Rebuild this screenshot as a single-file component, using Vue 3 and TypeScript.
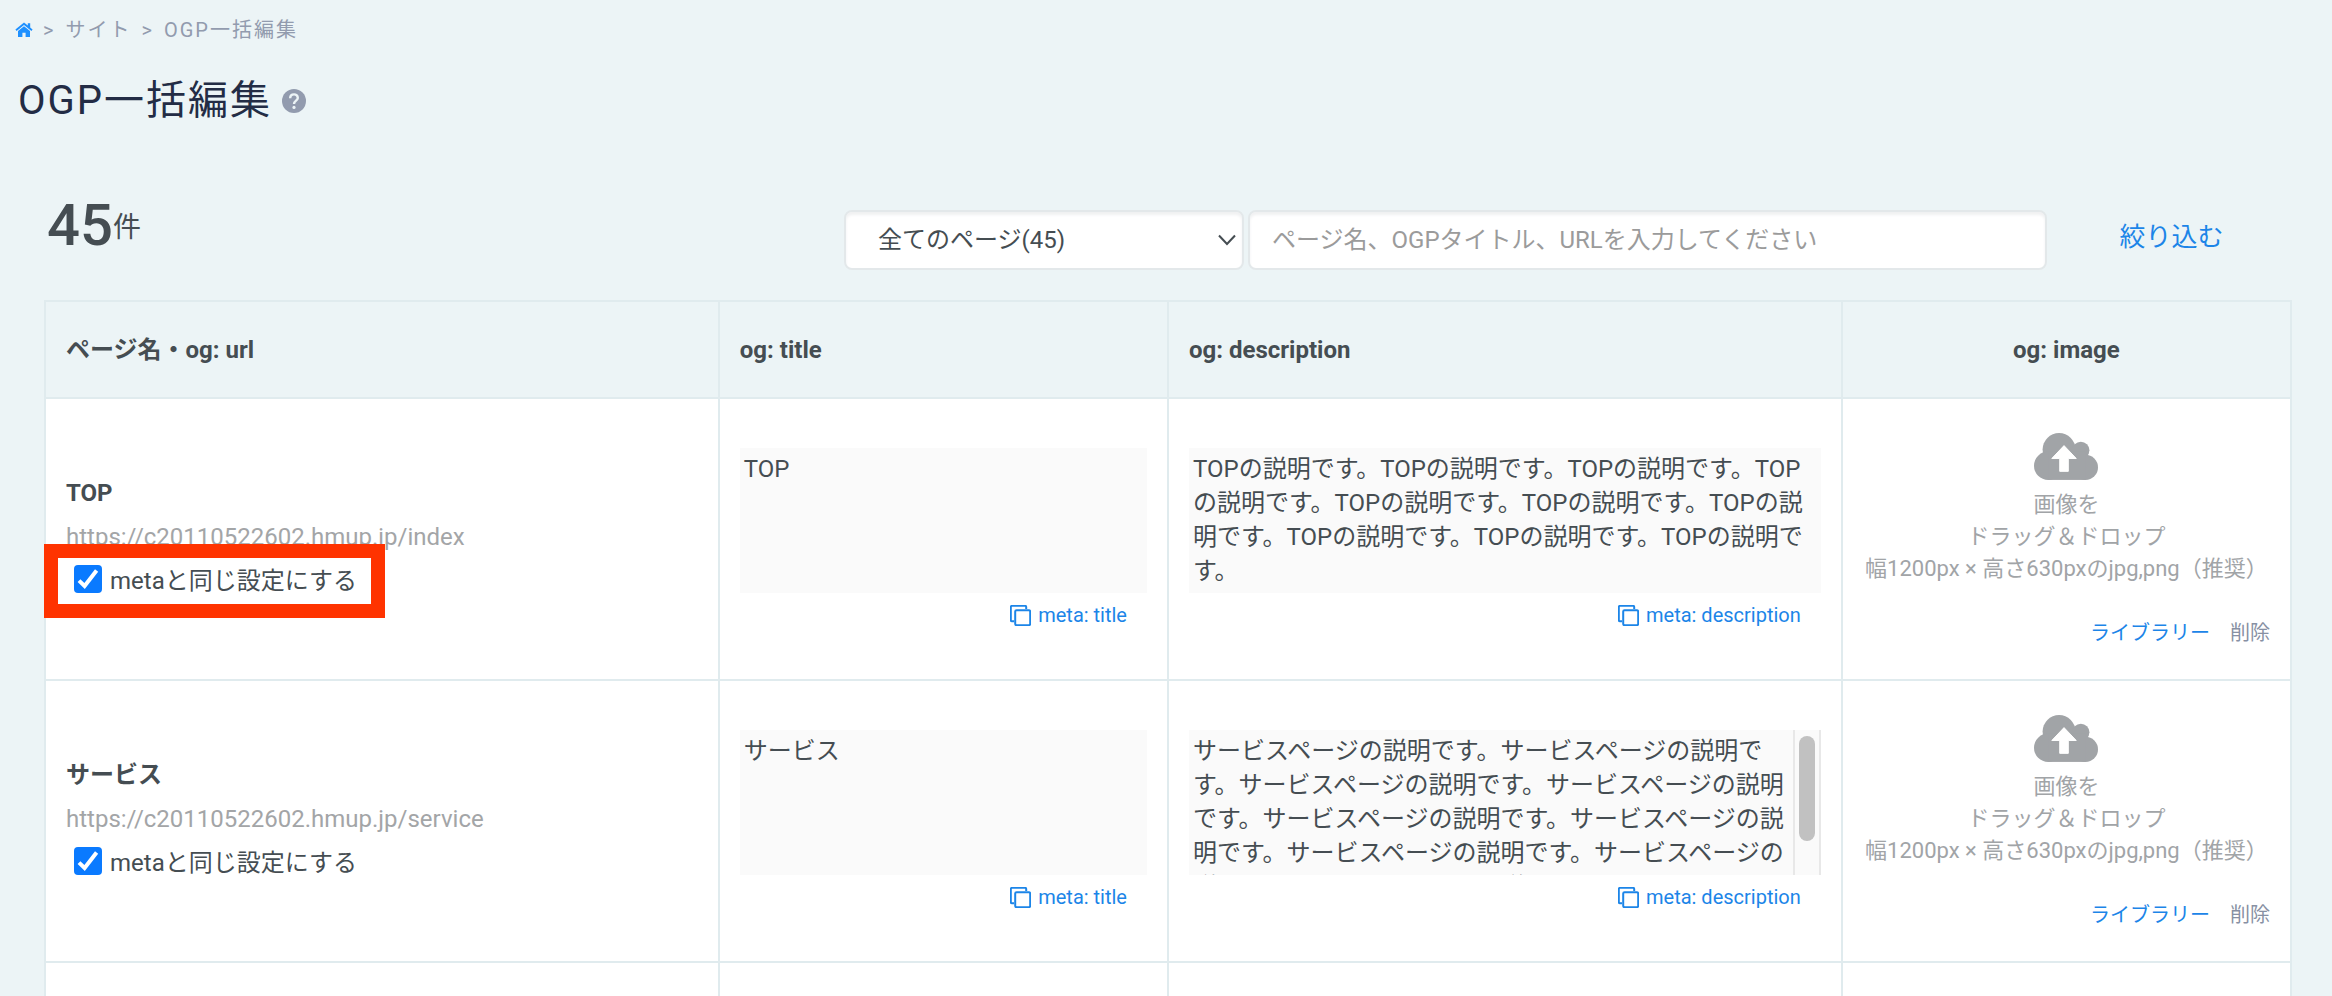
<script setup lang="ts">
import { ref } from 'vue'

interface OgpPage {
  id: string
  name: string
  url: string
  sameAsMeta: boolean
  highlighted: boolean
  scrollable: boolean
  title: string
  description: string
}

const filter = ref('all')
const keyword = ref('')

const pages = ref<OgpPage[]>([
  {
    id: 'index',
    name: 'TOP',
    url: 'https://c20110522602.hmup.jp/index',
    sameAsMeta: true,
    highlighted: true,
    scrollable: false,
    title: 'TOP',
    description: 'TOPの説明です。'.repeat(10),
  },
  {
    id: 'service',
    name: 'サービス',
    url: 'https://c20110522602.hmup.jp/service',
    sameAsMeta: true,
    highlighted: false,
    scrollable: true,
    title: 'サービス',
    description: 'サービスページの説明です。'.repeat(9),
  },
])
</script>

<template>
  <div class="page">
    <nav class="breadcrumb" aria-label="breadcrumb">
      <a href="#" class="home" aria-label="ホーム">
        <svg viewBox="0 0 18 16" width="18" height="16">
          <path d="M9 0.4 L0.4 7.6 L1.6 9 L9 2.9 L16.4 9 L17.6 7.6 L15.2 5.6 V1.2 H12.8 V3.5 Z" />
          <path d="M9 4.2 L3 9.1 V15 H7.4 V10.8 H10.6 V15 H15 V9.1 Z" />
        </svg>
      </a>
      <span>&gt;</span>
      <a href="#">サイト</a>
      <span>&gt;</span>
      <span>OGP一括編集</span>
    </nav>

    <header class="heading">
      <h1>OGP一括編集</h1>
      <button type="button" class="help" aria-label="ヘルプ">
        <svg viewBox="0 0 24 24" width="24" height="24">
          <circle cx="12" cy="12" r="12" fill="#929bae" />
          <path d="M8.2 9.2 C8.2 4.2 15.8 4.2 15.8 8.9 C15.8 11.6 12 11.8 12 15" fill="none" stroke="#ecf4f6" stroke-width="2.4" />
          <circle cx="12" cy="18.4" r="1.6" fill="#ecf4f6" />
        </svg>
      </button>
    </header>

    <main class="content">
      <form class="toolbar" @submit.prevent>
        <p class="count"><strong>45</strong><span>件</span></p>
        <div class="select-box">
          <select v-model="filter" aria-label="ページの種類">
            <option value="all">全てのページ(45)</option>
          </select>
          <svg viewBox="0 0 18 12" width="18" height="12">
            <path d="M1 1.5 L9 10 L17 1.5" fill="none" stroke="#454d52" stroke-width="2" />
          </svg>
        </div>
        <input
          v-model="keyword"
          type="text"
          class="keyword"
          aria-label="キーワード"
          placeholder="ページ名、OGPタイトル、URLを入力してください"
        />
        <button type="submit" class="submit">絞り込む</button>
      </form>

      <table class="ogp">
        <colgroup>
          <col class="wide" />
          <col class="narrow" />
          <col class="wide" />
          <col class="narrow" />
        </colgroup>
        <thead>
          <tr>
            <th scope="col">ページ名・og: url</th>
            <th scope="col">og: title</th>
            <th scope="col">og: description</th>
            <th scope="col" class="center">og: image</th>
          </tr>
        </thead>
        <tbody>
          <tr v-for="page in pages" :key="page.id">
            <td class="info">
              <div class="name">{{ page.name }}</div>
              <div class="url">{{ page.url }}</div>
              <label class="same">
                <span class="check">
                  <input v-model="page.sameAsMeta" type="checkbox" />
                  <svg v-if="page.sameAsMeta" viewBox="0 0 28 28" width="28" height="28">
                    <path d="M5 15.6 L10.6 21 L22.6 5.6" />
                  </svg>
                </span>
                metaと同じ設定にする
                <span v-if="page.highlighted" class="marker" />
              </label>
            </td>
            <td class="field">
              <textarea v-model="page.title" :aria-label="page.name + ' og: title'" />
              <button type="button" class="copy">
                <svg viewBox="0 0 21 21" width="21" height="21">
                  <path d="M4 16.2 H2 A1.2 1.2 0 0 1 0.8 15 V2 A1.2 1.2 0 0 1 2 0.8 H15 A1.2 1.2 0 0 1 16.2 2 V4" />
                  <rect x="5.2" y="5.2" width="15" height="15" rx="1.4" />
                </svg>
                meta: title
              </button>
            </td>
            <td class="field">
              <div class="area" :class="{ scrollable: page.scrollable }">
                <textarea v-model="page.description" :aria-label="page.name + ' og: description'" />
                <div v-if="page.scrollable" class="track"><div class="thumb" /></div>
              </div>
              <button type="button" class="copy">
                <svg viewBox="0 0 21 21" width="21" height="21">
                  <path d="M4 16.2 H2 A1.2 1.2 0 0 1 0.8 15 V2 A1.2 1.2 0 0 1 2 0.8 H15 A1.2 1.2 0 0 1 16.2 2 V4" />
                  <rect x="5.2" y="5.2" width="15" height="15" rx="1.4" />
                </svg>
                meta: description
              </button>
            </td>
            <td class="image">
              <div class="drop">
                <svg viewBox="0 0 194 142" width="64" height="47">
                  <g fill="#a1a4a7">
                    <circle cx="76" cy="50" r="50" />
                    <circle cx="142" cy="52" r="26" />
                    <circle cx="43" cy="99" r="43" />
                    <circle cx="156" cy="104" r="38" />
                    <rect x="43" y="56" width="113" height="86" />
                  </g>
                  <path d="M91 38 L128 77 H104 V116 H78 V77 H54 Z" fill="#fff" stroke="#fff" stroke-width="3" stroke-linejoin="round" />
                </svg>
                <p>画像を<br />ドラッグ＆ドロップ<br />幅1200px × 高さ630pxのjpg,png（推奨）</p>
              </div>
              <div class="actions">
                <button type="button" class="library">ライブラリー</button>
                <button type="button" class="delete">削除</button>
              </div>
            </td>
          </tr>
          <tr class="next">
            <td /><td /><td /><td />
          </tr>
        </tbody>
      </table>
    </main>
  </div>
</template>

<style>
html,
body {
  margin: 0;
  background: #ecf4f6;
}
</style>

<style scoped>
.page {
  font-family: Roboto, "Noto Sans CJK JP", sans-serif;
  font-size: 24px;
  color: #454d52;
}

button,
input,
select,
textarea {
  font: inherit;
  color: inherit;
}

button {
  border: 0;
  padding: 0;
  background: none;
  cursor: pointer;
}

svg {
  display: block;
}

.breadcrumb {
  display: flex;
  align-items: center;
  gap: 10px;
  padding: 18px 15px 0;
  font-size: 20px;
  line-height: 24px;
  letter-spacing: 2px;
  color: #929bae;
}

.breadcrumb a {
  color: inherit;
  text-decoration: none;
}

.home svg {
  fill: #1e90ff;
}

.heading {
  display: flex;
  align-items: center;
  gap: 10px;
  padding: 29px 18px 0;
}

h1 {
  margin: 0;
  font-size: 40px;
  line-height: 60px;
  font-weight: 400;
  letter-spacing: 2px;
  color: #232c45;
}

.content {
  padding: 50px 40px 0 44px;
}

.toolbar {
  display: grid;
  grid-template-columns: 800fr 404fr 799fr 245fr;
  align-items: start;
  margin-bottom: 30px;
}

.count {
  display: flex;
  align-items: flex-end;
  margin: 14px 0 0;
  padding-left: 3px;
  font-size: 28px;
  line-height: 54px;
}

.count strong {
  font-size: 58px;
  font-weight: 500;
  line-height: 60px;
}

.select-box {
  display: grid;
  align-items: center;
  margin: 29px 4px 0 0;
}

.select-box > * {
  grid-area: 1 / 1;
}

.select-box svg {
  justify-self: end;
  margin-right: 8px;
  pointer-events: none;
}

select,
.keyword {
  appearance: none;
  box-sizing: border-box;
  width: 100%;
  height: 60px;
  border: 2px solid #e3e8ea;
  border-radius: 8px;
  background: #fff;
  box-shadow: inset 0 3px 3px #f0f1f2;
  outline: 0;
}

select {
  padding: 0 32px;
}

.keyword {
  margin-top: 29px;
  padding: 0 22px;
}

.keyword::placeholder {
  color: #9b9b9b;
  opacity: 1;
}

.submit {
  margin-top: 36px;
  padding-left: 4px;
  font-size: 26px;
  line-height: 40px;
  color: #1c85e8;
}

.ogp {
  width: 100%;
  table-layout: fixed;
  border-collapse: separate;
  border-spacing: 0;
  border-top: 2px solid #e0ebee;
  border-left: 2px solid #e0ebee;
}

.wide {
  width: 30%;
}

.narrow {
  width: 20%;
}

th,
td {
  padding: 0 20px;
  border-right: 2px solid #e0ebee;
  border-bottom: 2px solid #e0ebee;
  text-align: left;
}

th {
  height: 95px;
  font-weight: 700;
  line-height: 34px;
}

th.center {
  text-align: center;
}

td {
  box-sizing: border-box;
  height: 282px;
  background: #fff;
  vertical-align: top;
}

.next td {
  height: 33px;
  border-bottom: 0;
}

td.info {
  padding-bottom: 4px;
  vertical-align: middle;
  line-height: 44px;
}

.name {
  font-weight: 700;
}

.url {
  color: #a3a5a7;
}

.same {
  position: relative;
  display: flex;
  align-items: center;
  gap: 8px;
  width: max-content;
  padding-left: 8px;
}

.check {
  display: grid;
  margin-bottom: 4px;
}

.check > * {
  grid-area: 1 / 1;
}

.check input {
  appearance: none;
  width: 28px;
  height: 28px;
  margin: 0;
  border-radius: 4px;
  background: #0a7aff;
}

.check svg {
  fill: none;
  stroke: #fff;
  stroke-width: 4;
  pointer-events: none;
}

.marker {
  position: absolute;
  inset: -15px -28px -15px -22px;
  border: 14px solid #ff3300;
  pointer-events: none;
}

td.field {
  padding-top: 49px;
}

textarea {
  display: block;
  box-sizing: border-box;
  width: 100%;
  height: 145px;
  padding: 4px 0 4px 4px;
  border: 0;
  background: #fafafa;
  line-height: 34px;
  resize: none;
  outline: 0;
  scrollbar-width: none;
}

.area {
  position: relative;
}

.scrollable textarea {
  padding-right: 27px;
}

.track {
  position: absolute;
  inset: 0 0 0 auto;
  box-sizing: border-box;
  width: 28px;
  padding: 6px 4px;
  border: solid #e8e8e8;
  border-width: 0 2px;
  pointer-events: none;
}

.thumb {
  height: 105px;
  border-radius: 8px;
  background: #c1c1c1;
}

.copy {
  display: flex;
  align-items: center;
  gap: 7px;
  margin: 10px 20px 0 auto;
  font-size: 20px;
  line-height: 24px;
  color: #1c85e8;
}

.copy svg {
  fill: none;
  stroke: currentColor;
  stroke-width: 2;
}

td.image {
  padding-top: 34px;
}

.drop {
  display: flex;
  flex-direction: column;
  align-items: center;
  gap: 9px;
  font-size: 22px;
  line-height: 32px;
  color: #a1a4a7;
  text-align: center;
  white-space: nowrap;
}

.drop p {
  margin: 0;
}

.actions {
  display: flex;
  justify-content: flex-end;
  gap: 20px;
  margin-top: 36px;
  font-size: 20px;
  line-height: 24px;
}

.library {
  color: #1c85e8;
}

.delete {
  color: #8790a3;
}
</style>
